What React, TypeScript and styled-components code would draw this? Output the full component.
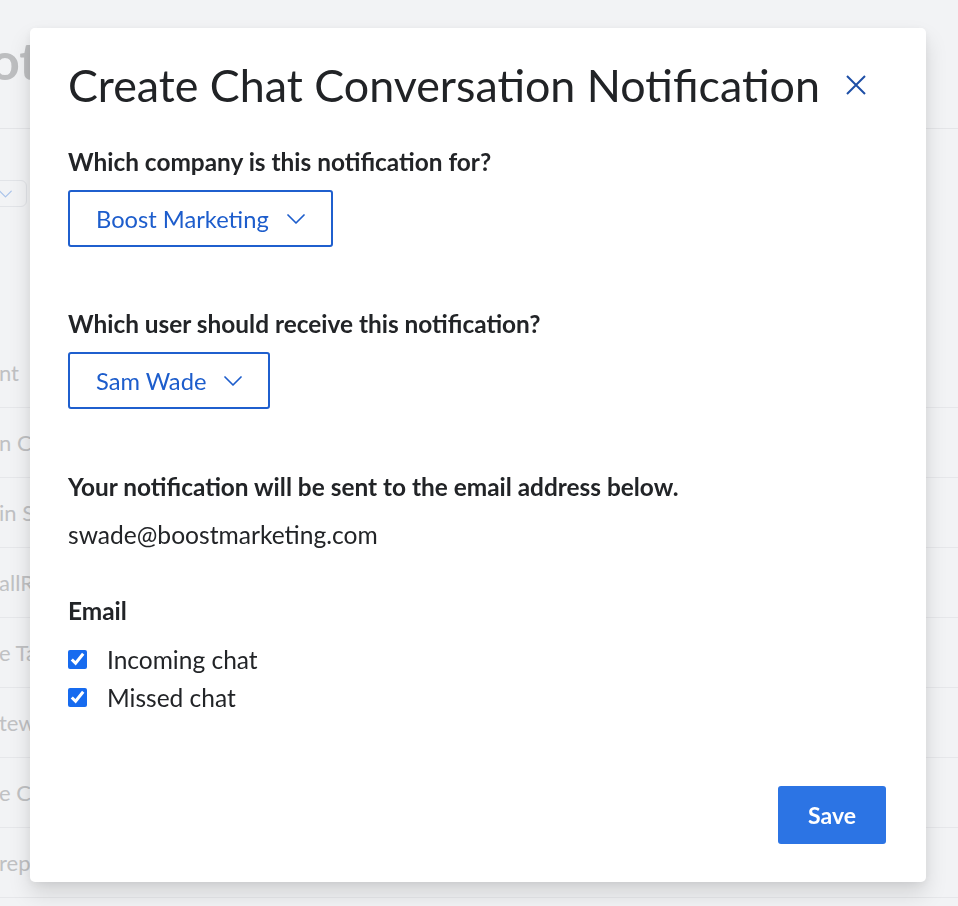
import React from "react";
import styled, { createGlobalStyle } from "styled-components";

const GlobalStyle = createGlobalStyle`
  html, body { margin: 0; padding: 0; }
  body {
    font-family: Lato, "Noto Sans", sans-serif;
    background: #f2f3f5;
    -webkit-font-smoothing: antialiased;
  }
  * { box-sizing: border-box; }
`;

/* ---------- background page (dimmed) ---------- */
const Page = styled.div`
  width: 100%;
  height: 906px;
  overflow: hidden;
  background: #f2f3f5;
`;

const PageHeader = styled.header`
  height: 129px;
  padding-top: 29px;
  border-bottom: 1px solid #e4e5e8;
`;

const PageTitle = styled.h1`
  margin: 0 0 0 -10px;
  font-size: 52px;
  line-height: 1.2;
  font-weight: 700;
  color: #bdbec0;
  white-space: nowrap;
`;

const FilterBox = styled.div`
  margin: 51px 0 0 -80px;
  width: 107px;
  height: 27px;
  border: 1px solid #e2e4e8;
  border-radius: 6px;
  display: flex;
  align-items: center;
  justify-content: flex-end;
  padding-right: 14px;
`;

const Rows = styled.div`
  margin-top: 131px;
`;

const Row = styled.div`
  height: 70px;
  border-bottom: 1px solid #e6e7ea;
  display: flex;
  align-items: center;
`;

const RowText = styled.span`
  margin-left: -1px;
  font-size: 22px;
  color: #c0c1c3;
  white-space: nowrap;
`;

/* ---------- modal ---------- */
const Overlay = styled.div`
  position: fixed;
  inset: 0;
  display: flex;
  align-items: flex-start;
  justify-content: flex-start;
  padding: 28px 0 0 30px;
`;

const Modal = styled.div`
  width: 896px;
  background: #ffffff;
  border-radius: 5px;
  box-shadow: 0 12px 22px rgba(0, 0, 0, 0.13), 0 2px 10px rgba(0, 0, 0, 0.06);
  padding: 30px 40px 38px 38px;
  display: flex;
  flex-direction: column;
`;

const Header = styled.div`
  display: flex;
  align-items: center;
  gap: 26px;
`;

const Title = styled.h2`
  margin: 0;
  font-size: 44.8px;
  line-height: 54px;
  font-weight: 400;
  color: #212326;
  white-space: nowrap;
`;

const CloseButton = styled.button`
  border: none;
  background: none;
  padding: 0;
  width: 20px;
  height: 20px;
  display: flex;
  color: #1e4fa6;
  cursor: pointer;
`;

const Section = styled.div<{ $mt: number }>`
  margin-top: ${(p) => p.$mt}px;
  display: flex;
  flex-direction: column;
  align-items: flex-start;
`;

const Label = styled.div<{ $mb?: number }>`
  font-size: 24.4px;
  line-height: 28px;
  font-weight: 700;
  color: #222427;
  margin-bottom: ${(p) => p.$mb ?? 0}px;
  white-space: nowrap;
`;

const SelectButton = styled.button`
  height: 57px;
  border: 2px solid #1f5fce;
  border-radius: 3px;
  background: #fff;
  padding: 0 26px 0 26px;
  display: flex;
  align-items: center;
  gap: 18px;
  font-family: inherit;
  font-size: 23.7px;
  color: #1d5dcc;
  cursor: pointer;
`;

const BodyText = styled.div<{ $mt?: number }>`
  margin-top: ${(p) => p.$mt ?? 0}px;
  font-size: 24.6px;
  line-height: 28px;
  color: #222427;
`;

const CheckList = styled.div`
  margin-top: 20px;
  display: flex;
  flex-direction: column;
  gap: 10px;
`;

const CheckRow = styled.label`
  height: 28px;
  display: flex;
  align-items: center;
  gap: 20px;
  font-size: 24.5px;
  color: #222427;
  cursor: pointer;
`;

const CheckInput = styled.input`
  width: 19px;
  height: 19px;
  margin: 0;
  accent-color: #176bef;
`;

const Footer = styled.div`
  margin-top: 75px;
  display: flex;
  justify-content: flex-end;
`;

const SaveButton = styled.button`
  height: 58px;
  width: 108px;
  border: none;
  border-radius: 3px;
  background: #2c74e4;
  color: #ffffff;
  font-family: inherit;
  font-size: 23px;
  font-weight: 700;
  cursor: pointer;
`;

const Chevron = ({ color, w = 18, h = 10 }: { color: string; w?: number; h?: number }) => (
  <svg width={w} height={h} viewBox="0 0 18 10" fill="none">
    <polyline points="1,1 9,9 17,1" stroke={color} strokeWidth="1.7" strokeLinecap="round" strokeLinejoin="round" />
  </svg>
);

const rows = ["nt", "n Ca", "in S", "allR", "e Ta", "tew", "e Co", "rep"];

export default function App() {
  return (
    <>
      <GlobalStyle />
      <Page>
        <PageHeader>
          <PageTitle>ot</PageTitle>
        </PageHeader>
        <FilterBox>
          <Chevron color="#a9c3ea" w={13} h={8} />
        </FilterBox>
        <Rows>
          {rows.map((r) => (
            <Row key={r}>
              <RowText>{r}</RowText>
            </Row>
          ))}
        </Rows>
      </Page>

      <Overlay>
        <Modal role="dialog" aria-label="Create Chat Conversation Notification">
          <Header>
            <Title>Create Chat Conversation Notification</Title>
            <CloseButton aria-label="Close">
              <svg width="20" height="20" viewBox="0 0 20 20" fill="none">
                <path d="M1 1 L19 19 M19 1 L1 19" stroke="currentColor" strokeWidth="2" />
              </svg>
            </CloseButton>
          </Header>

          <Section $mt={36}>
            <Label $mb={14}>Which company is this notification for?</Label>
            <SelectButton>
              Boost Marketing
              <Chevron color="#1d5dcc" />
            </SelectButton>
          </Section>

          <Section $mt={63}>
            <Label $mb={14}>Which user should receive this notification?</Label>
            <SelectButton>
              Sam Wade
              <Chevron color="#1d5dcc" />
            </SelectButton>
          </Section>

          <Section $mt={64}>
            <Label>Your notification will be sent to the email address below.</Label>
            <BodyText $mt={20}>swade@boostmarketing.com</BodyText>
          </Section>

          <Section $mt={48}>
            <Label>Email</Label>
            <CheckList>
              <CheckRow>
                <CheckInput type="checkbox" defaultChecked />
                Incoming chat
              </CheckRow>
              <CheckRow>
                <CheckInput type="checkbox" defaultChecked />
                Missed chat
              </CheckRow>
            </CheckList>
          </Section>

          <Footer>
            <SaveButton>Save</SaveButton>
          </Footer>
        </Modal>
      </Overlay>
    </>
  );
}
